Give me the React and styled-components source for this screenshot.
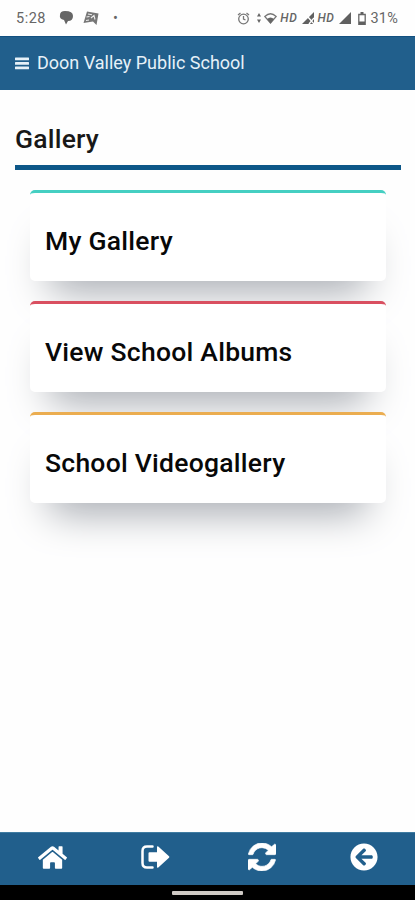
import React from 'react';
import styled, { createGlobalStyle } from 'styled-components';
import { FaHome, FaArrowCircleLeft } from 'react-icons/fa';

const GlobalStyle = createGlobalStyle`
  * {
    box-sizing: border-box;
  }

  body {
    margin: 0;
    background-color: #fefefe;
    font-family: Roboto, sans-serif;
  }
`;

const Screen = styled.div`
  display: flex;
  flex-direction: column;
  height: 900px;
  overflow: hidden;
`;

const StatusBar = styled.div`
  display: flex;
  justify-content: space-between;
  align-items: center;
  height: 36px;
  padding: 0 17px 0 16px;
  color: #666;
  font-size: 14.5px;
  flex-shrink: 0;

  svg {
    display: block;
  }
`;

const StatusGroup = styled.div`
  display: flex;
  align-items: center;
`;

const StatusItem = styled.span`
  margin-left: ${props => props.$gap || 0}px;
  letter-spacing: ${props => props.$spacing || 0}px;
`;

const Network = styled.span`
  margin-left: ${props => props.$gap}px;
  font-size: 12px;
  font-style: italic;
  font-weight: 500;
  letter-spacing: 0.6px;
`;

const Header = styled.header`
  display: flex;
  align-items: center;
  height: 54px;
  padding: 0 15px 1px;
  background-color: #215f8c;
  border-top: 1px solid #125080;
  color: #e6f1f8;
  flex-shrink: 0;
`;

const SchoolName = styled.span`
  margin-left: 8px;
  font-size: 18px;
  line-height: 24px;
`;

const Main = styled.main`
  flex: 1;
  padding: 29px 14px 0 15px;
`;

const PageTitle = styled.h1`
  margin: 0;
  padding-bottom: 6px;
  border-bottom: 5px solid #0d5788;
  color: #181818;
  font-size: 26.5px;
  font-weight: 500;
  line-height: 40px;
  letter-spacing: 0.2px;
`;

const CardList = styled.div`
  display: flex;
  flex-direction: column;
  gap: 20px;
  padding: 20px 15px 0;
`;

const Card = styled.div`
  display: flex;
  align-items: center;
  height: 91px;
  padding: 7px 15px 0;
  background-color: #fff;
  border-top: 3px solid ${props => props.$color};
  border-radius: 5px;
  box-shadow: 0 30px 40px -20px #a3a7ae;
`;

const CardTitle = styled.h2`
  margin: 0;
  color: #080808;
  font-size: 26.5px;
  font-weight: 500;
  line-height: 40px;
  letter-spacing: 0.25px;
  white-space: nowrap;
`;

const BottomNav = styled.nav`
  display: flex;
  justify-content: space-between;
  align-items: center;
  height: 53px;
  padding: 0 37px 4px 38px;
  background-color: #215f8c;
  border-top: 1px solid #3f7ca2;
  color: #fff;
  flex-shrink: 0;
`;

const NavButton = styled.button`
  display: flex;
  padding: 0;
  margin-left: ${props => props.$offset || 0}px;
  border: 0;
  background: none;
  color: inherit;
`;

const GestureBar = styled.div`
  display: flex;
  justify-content: center;
  height: 15px;
  padding-top: 6px;
  background-color: #000;
  flex-shrink: 0;
`;

const GestureHandle = styled.div`
  width: 71px;
  height: 4px;
  background-color: #cfcac5;
  border-radius: 1px;
`;

const cards = [
  { title: 'My Gallery', color: '#45cfc2' },
  { title: 'View School Albums', color: '#d94f60' },
  { title: 'School Videogallery', color: '#ebad50' },
];

const MenuIcon = () => (
  <svg width="14" height="13" viewBox="0 0 14 13" fill="currentColor">
    <rect y="0.5" width="14" height="2.7" rx="0.5" />
    <rect y="5" width="14" height="2.7" rx="0.5" />
    <rect y="9.5" width="14" height="2.7" rx="0.5" />
  </svg>
);

const ChatIcon = () => (
  <svg width="15" height="14" viewBox="0 0 15 14">
    <path d="M1 4Q1 0 6 0Q14 0 14 5Q14 10 9 10L7 13.5L5 9Q0 8 1 4Z" fill="#666" />
  </svg>
);

const CardsIcon = () => (
  <svg width="16" height="15" viewBox="0 0 16 15">
    <path d="M4 0.5L15.5 2.5L13.5 14L10 10.5L0.5 12Z" fill="#777" />
    <path d="M5 3l4 .8M3.5 6l3-.5M3 9.5l3-.5M8 7l3-2.5 1 4" fill="none" stroke="#eee" strokeWidth="1.1" />
  </svg>
);

const AlarmIcon = () => (
  <svg width="13" height="13" viewBox="0 0 13 13" fill="none" stroke="#777" strokeWidth="1.3">
    <circle cx="6.5" cy="7" r="4.8" />
    <path d="M6.5 4v3l2 1M1 3l2.5-2M12 3L9.5 1" />
  </svg>
);

const WifiIcon = () => (
  <svg width="20" height="14" viewBox="0 0 20 14" fill="#666">
    <path d="M2 2l2 3.5H0ZM2 12L0 8.5h4Z" />
    <path d="M7.8 5.5Q13.5 0 19.2 5.5L13.5 12Z" fill="none" stroke="#777" strokeWidth="1.2" />
    <path d="M10 8Q13.5 5 17 8L13.5 12.5Z" />
  </svg>
);

const SignalIcon = ({ roaming }) => (
  <svg width="12" height="12" viewBox="0 0 12 12" fill="#606060">
    <path d="M12 0V12H0Z" />
    {roaming && <path d="M6 5l6 7M7 12l5-6" stroke="#fff" strokeWidth="1.4" />}
  </svg>
);

const BatteryIcon = () => (
  <svg width="8" height="13" viewBox="0 0 8 13" fill="#606060">
    <path d="M2.5 0h3v2h-3Z" />
    <path d="M.8 2.5h6.4v9.8H.8Z" fill="none" stroke="#666" strokeWidth="1.3" />
    <path d="M1 9.5h6v3H1Z" />
  </svg>
);

const SignOutIcon = () => (
  <svg width="29" height="24" viewBox="0 0 29 24">
    <path
      d="M11.5 1.5H6Q1.5 1.5 1.5 6V18Q1.5 22.5 6 22.5H11.5"
      fill="none"
      stroke="#fff"
      strokeWidth="2.5"
      strokeLinecap="round"
    />
    <path
      d="M8.5 7.2H16V2.2Q16 .5 17.3 1.5L28 11.2Q28.9 12 28 12.8L17.3 22.5Q16 23.5 16 21.8V16.8H8.5Q7.5 16.8 7.5 15.8V8.2Q7.5 7.2 8.5 7.2Z"
      fill="#fff"
    />
  </svg>
);

const RefreshIcon = () => (
  <svg width="28" height="28" viewBox="0 0 1536 1536" fill="#fff">
    <path
      d="M1511 928q0 5-1 7-64 268-268 434.500T764 1536q-146 0-282.500-55T238 1324l-129 129q-19 19-45 19t-45-19-19-45V960q0-26 19-45t45-19h448q26 0 45 19t19 45-19 45l-137 137q71 66 161 102t187 36q134 0 250-65t186-179q11-17 53-117 8-23 30-23h192q13 0 22.500 9.500t9.500 22.500zm25-800v448q0 26-19 45t-45 19h-448q-26 0-45-19t-19-45 19-45l138-138Q969 256 768 256q-134 0-250 65T332 500q-11 17-53 117-8 23-30 23H50q-13 0-22.500-9.500T18 608v-7q65-268 270-434.500T768 0q146 0 284 55.500T1297 212l130-129q19-19 45-19t45 19 19 45z"
      stroke="#fff"
      strokeWidth="36"
    />
  </svg>
);

const App = () => {
  return (
    <>
      <GlobalStyle />
      <Screen>
        <StatusBar>
          <StatusGroup>
            <StatusItem $spacing={0.5}>5:28</StatusItem>
            <StatusItem $gap={13}><ChatIcon /></StatusItem>
            <StatusItem $gap={9}><CardsIcon /></StatusItem>
            <StatusItem $gap={14}>•</StatusItem>
          </StatusGroup>
          <StatusGroup>
            <AlarmIcon />
            <StatusItem $gap={7}><WifiIcon /></StatusItem>
            <Network $gap={3}>HD</Network>
            <StatusItem $gap={5}><SignalIcon roaming /></StatusItem>
            <Network $gap={3}>HD</Network>
            <StatusItem $gap={5}><SignalIcon /></StatusItem>
            <StatusItem $gap={7}><BatteryIcon /></StatusItem>
            <StatusItem $gap={4} $spacing={0.2}>31%</StatusItem>
          </StatusGroup>
        </StatusBar>

        <Header>
          <MenuIcon />
          <SchoolName>Doon Valley Public School</SchoolName>
        </Header>

        <Main>
          <PageTitle>Gallery</PageTitle>
          <CardList>
            {cards.map(card => (
              <Card key={card.title} $color={card.color}>
                <CardTitle>{card.title}</CardTitle>
              </Card>
            ))}
          </CardList>
        </Main>

        <BottomNav>
          <NavButton aria-label="Home"><FaHome size={29} /></NavButton>
          <NavButton aria-label="Sign out"><SignOutIcon /></NavButton>
          <NavButton aria-label="Refresh" $offset={3}><RefreshIcon /></NavButton>
          <NavButton aria-label="Back"><FaArrowCircleLeft size={28} /></NavButton>
        </BottomNav>
        <GestureBar>
          <GestureHandle />
        </GestureBar>
      </Screen>
    </>
  );
};

export default App;
